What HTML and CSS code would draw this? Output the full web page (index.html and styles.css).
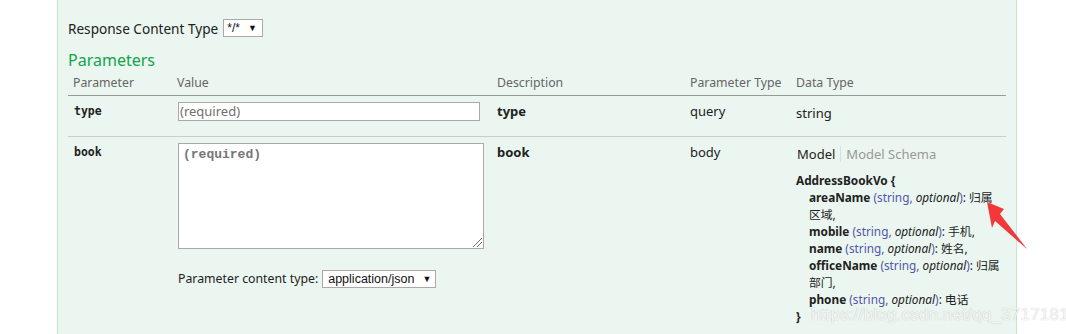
FILE: index.html
```html
<!DOCTYPE html>
<html lang="en">
<head>
    <meta charset="UTF-8">
    <meta name="viewport" content="width=device-width, initial-scale=1.0">
    <title>Swagger operation</title>
    <link rel="stylesheet" href="styles.css">
</head>
<body>
    <div class="content">
        <div class="response-type">
            <label>Response Content Type</label>
            <span class="fake-select small">*/* <b>▼</b></span>
        </div>

        <h4 class="heading">Parameters</h4>
        <table class="params">
            <thead>
                <tr>
                    <th class="col-name">Parameter</th>
                    <th class="col-value">Value</th>
                    <th class="col-desc">Description</th>
                    <th class="col-ptype">Parameter Type</th>
                    <th class="col-dtype">Data Type</th>
                </tr>
            </thead>
            <tbody>
                <tr>
                    <td class="code">type</td>
                    <td><div class="input">(required)</div></td>
                    <td class="desc">type</td>
                    <td>query</td>
                    <td class="plain"><span class="dtype">string</span></td>
                </tr>
                <tr class="body-row">
                    <td class="code">book</td>
                    <td>
                        <div class="textarea">(required)<span class="grip"></span></div>
                        <div class="content-type">
                            <label>Parameter content type:</label>
                            <span class="fake-select">application/json <b>▼</b></span>
                        </div>
                    </td>
                    <td class="desc">book</td>
                    <td>body</td>
                    <td>
                        <div class="tabs">
                            <span class="tab active">Model</span>
                            <span class="tab">Model Schema</span>
                        </div>
                        <div class="signature">
                            <div class="strong">AddressBookVo {</div>
                            <div class="prop"><span class="prop-name">areaName</span> <span class="prop-type">(string, <i>optional</i>)</span>: 归属区域,</div>
                            <div class="prop"><span class="prop-name">mobile</span> <span class="prop-type">(string, <i>optional</i>)</span>: 手机,</div>
                            <div class="prop"><span class="prop-name">name</span> <span class="prop-type">(string, <i>optional</i>)</span>: 姓名,</div>
                            <div class="prop"><span class="prop-name">officeName</span> <span class="prop-type">(string, <i>optional</i>)</span>: 归属部门,</div>
                            <div class="prop"><span class="prop-name">phone</span> <span class="prop-type">(string, <i>optional</i>)</span>: 电话</div>
                            <div class="strong">}</div>
                        </div>
                    </td>
                </tr>
            </tbody>
        </table>
    </div>

    <svg class="arrow" width="60" height="60" viewBox="980 195 60 60">
        <polygon points="987,202 1004,209 1000,214 1027,249 995,221 992,228" fill="#f2383a"/>
    </svg>
    <div class="watermark">https://blog.csdn.net/qq_37171817</div>
</body>
</html>
```

FILE: styles.css
```css
* {
    margin: 0;
    padding: 0;
    box-sizing: border-box;
}
body {
    background: #fff;
    font-family: "Noto Sans", "Open Sans", "Noto Sans CJK SC", sans-serif;
    font-size: 13px;
    color: #222;
    width: 1066px;
    height: 334px;
    overflow: hidden;
    position: relative;
}

.content {
    margin-left: 57px;
    width: 960px;
    height: 334px;
    background-color: #ebf6f0;
    border-left: 1px solid #c3e8d1;
    border-right: 1px solid #c3e8d1;
    padding: 18px 10px 0 10px;
}

.response-type {
    display: flex;
    align-items: center;
    gap: 5px;
    font-size: 13.6px;
    height: 20px;
}

.fake-select {
    display: inline-flex;
    align-items: center;
    height: 18px;
    padding: 0 4px 0 5px;
    background: #fff;
    border: 1px solid #a9a9a9;
    font-family: "Liberation Sans", Arial, sans-serif;
    font-size: 12.5px;
    color: #111;
}
.fake-select b {
    font-size: 9px;
    margin-left: 8px;
}
.fake-select.small {
    font-size: 12px;
    padding: 0 5px 0 3px;
}

.heading {
    color: #10a54a;
    font-size: 16px;
    font-weight: normal;
    margin-top: 12px;
    line-height: 20px;
}

.params {
    width: 938px;
    border-collapse: collapse;
    table-layout: fixed;
}
.params th {
    text-align: left;
    font-weight: normal;
    color: #666;
    font-size: 12.3px;
    white-space: nowrap;
    padding: 4px 5px 3px 5px;
    border-bottom: 1px solid #999;
    line-height: 18px;
}
.col-name { width: 104px; }
.col-value { width: 320px; }
.col-desc { width: 193px; }
.col-ptype { width: 106px; }

.params td {
    vertical-align: top;
    padding: 6px 5px 14px 5px;
    border-top: 1px solid #ccc;
    line-height: 18px;
}
.params td.code {
    font-family: "DejaVu Sans Mono", monospace;
    font-weight: bold;
    font-size: 11.5px;
    padding-left: 6px;
}
.params td.desc {
    font-weight: bold;
}
.dtype {
    display: block;
    padding-top: 2px;
}

.input {
    width: 302px;
    height: 19px;
    background: #fff;
    border: 1px solid #a9a9a9;
    color: #6f6f6f;
    font-size: 13px;
    line-height: 17px;
    padding-left: 1px;
    margin-left: 1px;
}

.textarea {
    position: relative;
    width: 306px;
    height: 106px;
    background: #fff;
    border: 1px solid #a9a9a9;
    margin-left: 1px;
    padding: 2px 4px;
    font-family: "Liberation Mono", "Courier New", monospace;
    font-weight: bold;
    font-size: 13px;
    color: #777;
}
.grip {
    position: absolute;
    right: 1px;
    bottom: 1px;
    width: 9px;
    height: 9px;
    background: linear-gradient(135deg, transparent 45%, #777 45%, #777 52%, transparent 52%, transparent 70%, #777 70%, #777 77%, transparent 77%);
}

.content-type {
    display: flex;
    align-items: center;
    gap: 4px;
    margin-top: 21px;
    margin-left: 1px;
    font-size: 12.3px;
}

.tabs {
    display: flex;
    margin-top: 3px;
    line-height: 16px;
}
.tab {
    color: #999;
    padding: 0 5px;
}
.tab.active {
    color: #222;
    padding-left: 1px;
    border-right: 1px solid #ddd;
}

.signature {
    margin-top: 10px;
    font-size: 11.8px;
    line-height: 17px;
    color: #222;
}
.strong {
    font-weight: bold;
}
.prop {
    padding-left: 13px;
}
.prop-name {
    font-weight: bold;
}
.prop-type {
    color: #5555aa;
}
.prop-type i {
    color: #222;
}

.arrow {
    position: absolute;
    left: 980px;
    top: 195px;
}
.watermark {
    position: absolute;
    left: 811px;
    top: 305px;
    font-family: "Liberation Sans", Arial, sans-serif;
    font-size: 17px;
    color: rgba(255, 255, 255, 0.85);
    text-shadow: 0 0 1px rgba(120, 120, 120, 0.5);
    letter-spacing: 0.2px;
}
```
